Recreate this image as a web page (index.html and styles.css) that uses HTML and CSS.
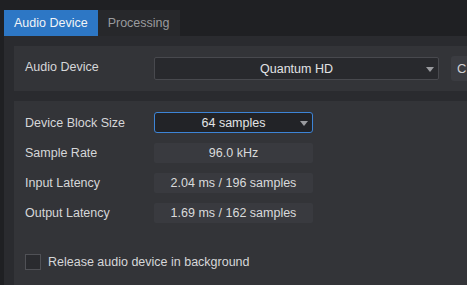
FILE: index.html
```html
<!DOCTYPE html>
<html lang="en">
<head>
    <meta charset="UTF-8">
    <title>Audio Setup</title>
    <link rel="stylesheet" href="styles.css">
</head>
<body>
    <div class="tabs">
        <div class="tab active">Audio Device</div>
        <div class="tab">Processing</div>
    </div>

    <div class="page">
        <!-- Device selection -->
        <div class="section top">
            <div class="label">Audio Device</div>
            <div class="select wide">Quantum HD<span class="arrow"></span></div>
            <div class="side-btn">C</div>
        </div>

        <!-- Device settings -->
        <div class="section settings">
            <div class="row">
                <div class="label">Device Block Size</div>
                <div class="select focus">64 samples<span class="arrow"></span></div>
            </div>
            <div class="row">
                <div class="label">Sample Rate</div>
                <div class="value">96.0 kHz</div>
            </div>
            <div class="row">
                <div class="label">Input Latency</div>
                <div class="value">2.04 ms / 196 samples</div>
            </div>
            <div class="row">
                <div class="label">Output Latency</div>
                <div class="value">1.69 ms / 162 samples</div>
            </div>

            <label class="check-row">
                <span class="checkbox"></span>
                Release audio device in background
            </label>
        </div>
    </div>
</body>
</html>
```

FILE: styles.css
```css
body {
    margin: 0;
    background-color: #1f2023;
    font-family: 'Liberation Sans', Arial, sans-serif;
    font-size: 12.5px;
    color: #d6d7d9;
    height: 285px;
    overflow: hidden;
}

/* Tabs */
.tabs {
    display: flex;
    padding: 10px 0 0 4px;
    height: 26px;
}

.tab {
    display: flex;
    align-items: center;
    padding: 0 10px;
    font-size: 12.5px;
    color: #9a9b9e;
    background-color: #27282b;
}

.tab.active {
    background-color: #2d77c5;
    color: #f2f4f7;
}

/* Page body */
.page {
    margin-left: 4px;
    background-color: #2a2b2f;
    padding: 10px 0 0 10px;
    height: 239px;
    display: flex;
    flex-direction: column;
    gap: 10px;
}

.section {
    background-color: #333438;
    padding-left: 11px;
}

.section.top {
    display: flex;
    align-items: center;
    height: 45px;
}

.label {
    width: 129px;
    flex-shrink: 0;
}

.section.top .label {
    margin-top: -4px;
}

.select {
    position: relative;
    box-sizing: border-box;
    height: 23px;
    display: flex;
    align-items: center;
    justify-content: center;
    background-color: #28292d;
    border: 1px solid #48494e;
    border-radius: 2px;
    color: #e2e3e5;
}

.select.wide {
    width: 285px;
}

.select.focus {
    width: 159px;
    height: 21px;
    background-color: #222327;
    border-color: #3d84d6;
    border-radius: 3px;
}

.arrow {
    position: absolute;
    right: 4px;
    top: 50%;
    margin-top: -2px;
    border-left: 4px solid transparent;
    border-right: 4px solid transparent;
    border-top: 5px solid #9a9b9f;
}

.side-btn {
    margin-left: 12px;
    height: 25px;
    flex: 1;
    background-color: #3b3c41;
    border-radius: 3px 0 0 3px;
    padding-left: 6px;
    display: flex;
    align-items: center;
    font-size: 13px;
    color: #cfd0d3;
}

/* Settings */
.settings {
    flex: 1;
    padding-top: 11px;
    display: flex;
    flex-direction: column;
    gap: 9px;
}

.row {
    display: flex;
    align-items: center;
    height: 21px;
}

.value {
    width: 159px;
    height: 20px;
    display: flex;
    align-items: center;
    justify-content: center;
    background-color: #393a3f;
    border-radius: 2px;
    color: #d9dadc;
}

.check-row {
    display: flex;
    align-items: center;
    gap: 7px;
    margin-top: 22px;
    color: #d6d7d9;
}

.checkbox {
    width: 14px;
    height: 14px;
    border: 1px solid #505156;
    background-color: #2a2b2f;
}
```
